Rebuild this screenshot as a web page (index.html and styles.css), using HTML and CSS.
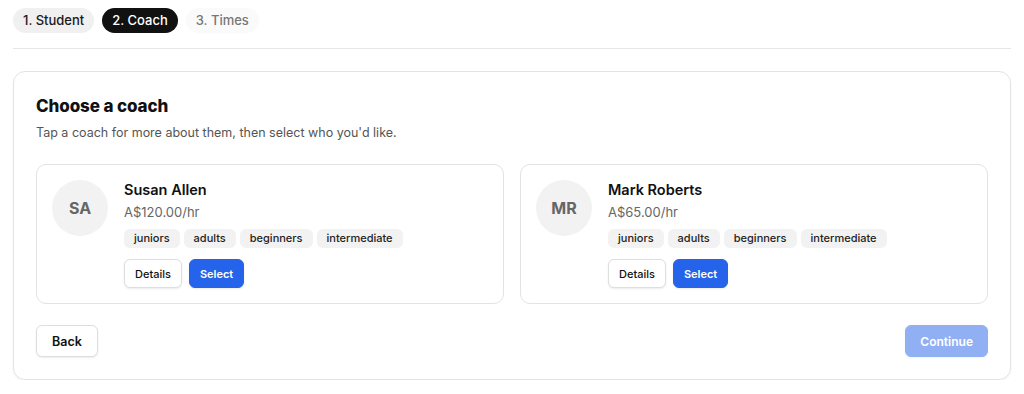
FILE: index.html
```html
<!DOCTYPE html>
<html lang="en">
<head>
  <meta charset="UTF-8">
  <title>Book a lesson - Choose a coach</title>
  <link rel="stylesheet" href="styles.css">
</head>
<body>
  <div class="steps">
    <span class="step done">1. Student</span>
    <span class="step active">2. Coach</span>
    <span class="step">3. Times</span>
  </div>

  <div class="panel">
    <h2>Choose a coach</h2>
    <p class="hint">Tap a coach for more about them, then select who you'd like.</p>

    <div class="coaches">
      <div class="coach">
        <div class="avatar">SA</div>
        <div class="info">
          <div class="name">Susan Allen</div>
          <div class="price">A$120.00/hr</div>
          <div class="tags">
            <span class="tag">juniors</span>
            <span class="tag">adults</span>
            <span class="tag">beginners</span>
            <span class="tag">intermediate</span>
          </div>
          <div class="actions">
            <button class="btn">Details</button>
            <button class="btn primary">Select</button>
          </div>
        </div>
      </div>

      <div class="coach">
        <div class="avatar">MR</div>
        <div class="info">
          <div class="name">Mark Roberts</div>
          <div class="price">A$65.00/hr</div>
          <div class="tags">
            <span class="tag">juniors</span>
            <span class="tag">adults</span>
            <span class="tag">beginners</span>
            <span class="tag">intermediate</span>
          </div>
          <div class="actions">
            <button class="btn">Details</button>
            <button class="btn primary">Select</button>
          </div>
        </div>
      </div>
    </div>

    <div class="footer">
      <button class="btn big">Back</button>
      <button class="btn big primary" disabled>Continue</button>
    </div>
  </div>
</body>
</html>
```

FILE: styles.css
```css
body {
  margin: 0;
  padding: 8px 13px 0;
  font-family: Inter, 'Noto Sans', sans-serif;
  color: #111;
  background: #fff;
}

.steps {
  display: flex;
  gap: 8px;
  padding-bottom: 15px;
  border-bottom: 1px solid #e6e6e6;
  margin-bottom: 22px;
}
.step {
  height: 25px;
  line-height: 25px;
  padding: 0 10px;
  border-radius: 13px;
  font-size: 13px;
  font-weight: 500;
  background: #fafafa;
  color: #777;
}
.step.done {
  background: #f0f0f0;
  color: #1a1a1a;
}
.step.active {
  background: #111;
  color: #fff;
}

.panel {
  border: 1px solid #e3e3e3;
  border-radius: 12px;
  padding: 23px 22px 22px;
  box-shadow: 0 1px 2px rgba(0,0,0,0.06);
}
h2 {
  margin: 0;
  font-size: 17px;
  line-height: 22px;
  font-weight: 800;
  letter-spacing: -0.1px;
}
.hint {
  margin: 7px 0 22px;
  font-size: 12.5px;
  line-height: 18px;
  color: #555;
}

.coaches {
  display: grid;
  grid-template-columns: 1fr 1fr;
  gap: 16px;
}
.coach {
  display: flex;
  gap: 16px;
  border: 1px solid #e3e3e3;
  border-radius: 10px;
  padding: 15px 15px 15px;
}
.avatar {
  flex: none;
  width: 56px;
  height: 56px;
  border-radius: 50%;
  background: #f2f2f2;
  color: #666;
  font-size: 16px;
  font-weight: 700;
  display: flex;
  align-items: center;
  justify-content: center;
}
.name {
  font-size: 14.5px;
  line-height: 20px;
  font-weight: 600;
}
.price {
  margin-top: 2px;
  font-size: 13px;
  line-height: 20px;
  color: #666;
}
.tags {
  display: flex;
  gap: 4px;
  margin-top: 7px;
}
.tag {
  height: 19px;
  line-height: 19px;
  padding: 0 10px;
  border-radius: 6px;
  background: #f2f2f2;
  font-size: 11px;
  font-weight: 500;
  color: #222;
}
.actions {
  display: flex;
  gap: 7px;
  margin-top: 11px;
}

.btn {
  font-family: inherit;
  height: 29px;
  padding: 0 10px;
  border: 1px solid #dedede;
  border-radius: 6px;
  background: #fff;
  color: #111;
  font-size: 11px;
  font-weight: 500;
  box-shadow: 0 1px 2px rgba(0,0,0,0.08);
}
.btn.primary {
  background: #2563eb;
  border-color: #2563eb;
  color: #fff;
  font-weight: 600;
  padding: 0 10px;
}
.btn.big {
  height: 32px;
  padding: 0 15px;
  font-size: 12.5px;
  font-weight: 600;
}
.btn.big.primary:disabled {
  opacity: 0.5;
  padding: 0 14px;
  font-size: 12px;
}

.footer {
  display: flex;
  justify-content: space-between;
  margin-top: 21px;
}
```
